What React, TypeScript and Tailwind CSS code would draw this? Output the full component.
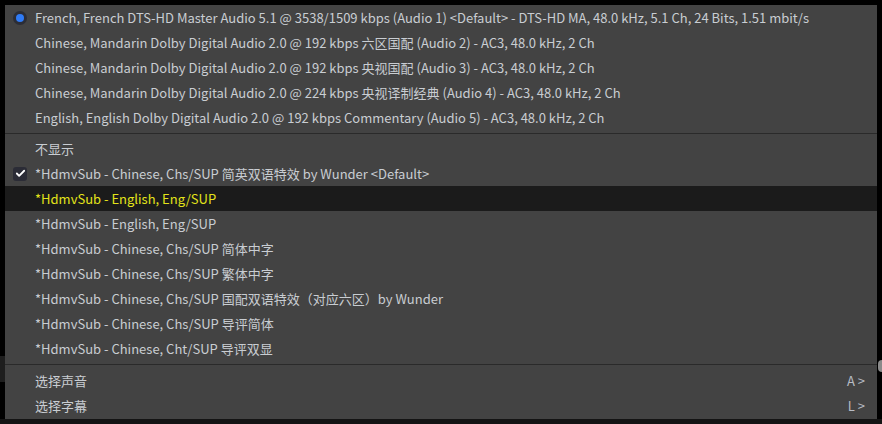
import { Check } from "lucide-react"

const audio = [
  "French, French DTS-HD Master Audio 5.1 @ 3538/1509 kbps (Audio 1) <Default> - DTS-HD MA, 48.0 kHz, 5.1 Ch, 24 Bits, 1.51 mbit/s",
  "Chinese, Mandarin Dolby Digital Audio 2.0 @ 192 kbps 六区国配 (Audio 2) - AC3, 48.0 kHz, 2 Ch",
  "Chinese, Mandarin Dolby Digital Audio 2.0 @ 192 kbps 央视国配 (Audio 3) - AC3, 48.0 kHz, 2 Ch",
  "Chinese, Mandarin Dolby Digital Audio 2.0 @ 224 kbps 央视译制经典 (Audio 4) - AC3, 48.0 kHz, 2 Ch",
  "English, English Dolby Digital Audio 2.0 @ 192 kbps Commentary (Audio 5) - AC3, 48.0 kHz, 2 Ch",
]

const subs = [
  "不显示",
  "*HdmvSub - Chinese, Chs/SUP 简英双语特效 by Wunder <Default>",
  "*HdmvSub - English, Eng/SUP",
  "*HdmvSub - English, Eng/SUP",
  "*HdmvSub - Chinese, Chs/SUP 简体中字",
  "*HdmvSub - Chinese, Chs/SUP 繁体中字",
  "*HdmvSub - Chinese, Chs/SUP 国配双语特效（对应六区）by Wunder",
  "*HdmvSub - Chinese, Chs/SUP 导评简体",
  "*HdmvSub - Chinese, Cht/SUP 导评双显",
]

function Row({ label, mark, hover, shortcut }: { label: string; mark?: "radio" | "check"; hover?: boolean; shortcut?: string }) {
  return (
    <div className={`flex h-[25px] items-center ${hover ? "bg-[#1b1b1b] text-[#e3e31a]" : "text-[#c9cdd2]"}`}>
      <div className="flex w-[30px] shrink-0 items-center justify-center">
        {mark === "radio" && (
          <span className="flex h-[14px] w-[14px] items-center justify-center rounded-full bg-[#2b2d36]">
            <span className="h-[8px] w-[8px] rounded-full bg-[#2f7bf5]" />
          </span>
        )}
        {mark === "check" && (
          <span className="flex h-[14px] w-[14px] items-center justify-center rounded-[3px] bg-[#2b2c36]">
            <Check className="h-[11px] w-[11px] text-white" strokeWidth={4} />
          </span>
        )}
      </div>
      <span className="flex-1 whitespace-pre">{label}</span>
      {shortcut && <span className="pr-[12px] text-[#b7bcc4]">{shortcut}</span>}
    </div>
  )
}

export default function App() {
  return (
    <div className="relative h-[424px] w-[882px] overflow-hidden bg-black p-[5px] text-[13px] leading-none [font-family:'Noto_Sans_CJK_SC','Noto_Sans',sans-serif]">
      {/* bits of video peeking behind the menu */}
      <div className="absolute left-0 top-[356px] h-[26px] w-[5px] bg-[#1e1e1e]" />
      <div className="absolute right-0 top-[360px] h-[12px] w-[4px] rounded-l-full bg-[#8a8a8a]" />
      <div className="absolute bottom-0 left-0 h-[5px] w-full bg-[#141414]" />

      <div className="relative flex h-[414px] w-[872px] flex-col bg-[#434343]">
        {audio.map((a, i) => (
          <Row key={i} label={a} mark={i === 0 ? "radio" : undefined} />
        ))}
        <div className="flex h-[6px] items-center">
          <div className="h-px w-full bg-[#2a2a2a]" />
        </div>
        {subs.map((s, i) => (
          <Row key={i} label={s} mark={i === 1 ? "check" : undefined} hover={i === 2} />
        ))}
        <div className="flex h-[7px] items-center">
          <div className="h-px w-full bg-[#2a2a2a]" />
        </div>
        <Row label="选择声音" shortcut="A >" />
        <Row label="选择字幕" shortcut="L >" />
      </div>
    </div>
  )
}
